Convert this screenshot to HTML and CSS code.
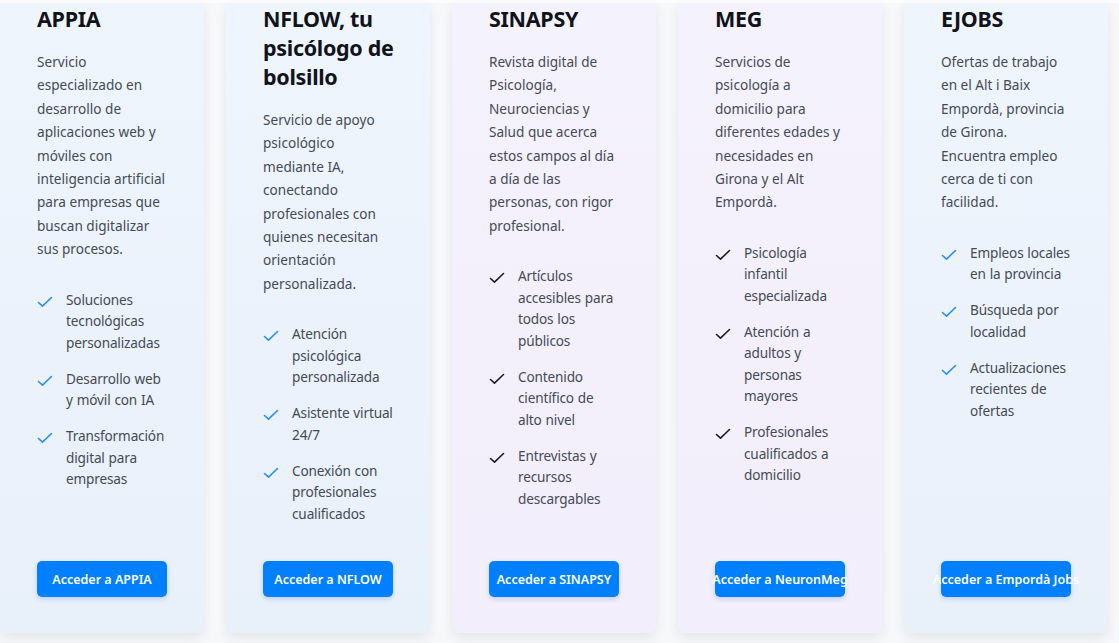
FILE: index.html
```html
<!DOCTYPE html>
<html lang="es">
<head>
<meta charset="utf-8">
<title>Proyectos</title>
<link rel="stylesheet" href="styles.css">
</head>
<body>
<div class="strip"></div>
<section class="grid">
  <article class="card blue">
    <h2 class="title">APPIA</h2>
    <p class="desc">Servicio especializado en desarrollo de aplicaciones web y móviles con inteligencia artificial para empresas que buscan digitalizar sus procesos.</p>
    <ul class="features">
      <li><svg class="check" viewBox="0 0 16 12"><path d="M1.5 6.5 L5.5 10.2 L14.5 1.5"/></svg><span>Soluciones tecnológicas personalizadas</span></li>
      <li><svg class="check" viewBox="0 0 16 12"><path d="M1.5 6.5 L5.5 10.2 L14.5 1.5"/></svg><span>Desarrollo web y móvil con IA</span></li>
      <li><svg class="check" viewBox="0 0 16 12"><path d="M1.5 6.5 L5.5 10.2 L14.5 1.5"/></svg><span>Transformación digital para empresas</span></li>
    </ul>
    <a class="btn" href="#">Acceder a APPIA</a>
  </article>
  <article class="card blue">
    <h2 class="title">NFLOW, tu psicólogo de bolsillo</h2>
    <p class="desc">Servicio de apoyo psicológico mediante IA, conectando profesionales con quienes necesitan orientación personalizada.</p>
    <ul class="features">
      <li><svg class="check" viewBox="0 0 16 12"><path d="M1.5 6.5 L5.5 10.2 L14.5 1.5"/></svg><span>Atención psicológica personalizada</span></li>
      <li><svg class="check" viewBox="0 0 16 12"><path d="M1.5 6.5 L5.5 10.2 L14.5 1.5"/></svg><span>Asistente virtual 24/7</span></li>
      <li><svg class="check" viewBox="0 0 16 12"><path d="M1.5 6.5 L5.5 10.2 L14.5 1.5"/></svg><span>Conexión con profesionales cualificados</span></li>
    </ul>
    <a class="btn" href="#">Acceder a NFLOW</a>
  </article>
  <article class="card lilac">
    <h2 class="title">SINAPSY</h2>
    <p class="desc">Revista digital de Psicología, Neurociencias y Salud que acerca estos campos al día a día de las personas, con rigor profesional.</p>
    <ul class="features">
      <li><svg class="check" viewBox="0 0 16 12"><path d="M1.5 6.5 L5.5 10.2 L14.5 1.5"/></svg><span>Artículos accesibles para todos los públicos</span></li>
      <li><svg class="check" viewBox="0 0 16 12"><path d="M1.5 6.5 L5.5 10.2 L14.5 1.5"/></svg><span>Contenido científico de alto nivel</span></li>
      <li><svg class="check" viewBox="0 0 16 12"><path d="M1.5 6.5 L5.5 10.2 L14.5 1.5"/></svg><span>Entrevistas y recursos descargables</span></li>
    </ul>
    <a class="btn" href="#">Acceder a SINAPSY</a>
  </article>
  <article class="card lilac">
    <h2 class="title">MEG</h2>
    <p class="desc">Servicios de psicología a domicilio para diferentes edades y necesidades en Girona y el Alt Empordà.</p>
    <ul class="features">
      <li><svg class="check" viewBox="0 0 16 12"><path d="M1.5 6.5 L5.5 10.2 L14.5 1.5"/></svg><span>Psicología infantil especializada</span></li>
      <li><svg class="check" viewBox="0 0 16 12"><path d="M1.5 6.5 L5.5 10.2 L14.5 1.5"/></svg><span>Atención a adultos y personas mayores</span></li>
      <li><svg class="check" viewBox="0 0 16 12"><path d="M1.5 6.5 L5.5 10.2 L14.5 1.5"/></svg><span>Profesionales cualificados a domicilio</span></li>
    </ul>
    <a class="btn" href="#">Acceder a NeuronMeg</a>
  </article>
  <article class="card blue">
    <h2 class="title">EJOBS</h2>
    <p class="desc">Ofertas de trabajo en el Alt i Baix Empordà, provincia de Girona. Encuentra empleo cerca de ti con facilidad.</p>
    <ul class="features">
      <li><svg class="check" viewBox="0 0 16 12"><path d="M1.5 6.5 L5.5 10.2 L14.5 1.5"/></svg><span>Empleos locales en la provincia</span></li>
      <li><svg class="check" viewBox="0 0 16 12"><path d="M1.5 6.5 L5.5 10.2 L14.5 1.5"/></svg><span>Búsqueda por localidad</span></li>
      <li><svg class="check" viewBox="0 0 16 12"><path d="M1.5 6.5 L5.5 10.2 L14.5 1.5"/></svg><span>Actualizaciones recientes de ofertas</span></li>
    </ul>
    <a class="btn" href="#">Acceder a Empordà Jobs</a>
  </article>
</section>
</body>
</html>
```
FILE: styles.css
```css
* { box-sizing: border-box; }
html, body { margin: 0; padding: 0; }
body {
  background: #f7f8fa;
  font-family: "Noto Sans", "Open Sans", sans-serif;
  color: #444b55;
  height: 643px;
  overflow: hidden;
}
.strip {
  height: 3px;
  background: #fdfdfe;
}
.grid {
  display: grid;
  grid-template-columns: repeat(5, 204px);
  column-gap: 22px;
  padding: 0;
}
.card {
  height: 630px;
  border-radius: 0 0 8px 8px;
  padding: 1px 37px 36px 37px;
  display: flex;
  flex-direction: column;
  box-shadow: 0 5px 12px rgba(30, 40, 60, 0.09);
}
.card.blue {
  background: linear-gradient(180deg, #eff5fd 0%, #ebf2fb 60%, #e8f0fa 100%);
}
.card.lilac {
  background: linear-gradient(180deg, #f4f2fd 0%, #f2eefb 100%);
}
.title {
  margin: 0 -2px 17px 0;
  font-size: 21.5px;
  line-height: 29px;
  font-weight: 700;
  color: #11131a;
  letter-spacing: -0.3px;
}
.desc {
  margin: 0 0 28px 0;
  font-size: 13.6px;
  line-height: 23.4px;
  color: #454b55;
}
.features {
  list-style: none;
  margin: 0 -1px 0 0;
  padding: 0;
  display: flex;
  flex-direction: column;
  gap: 14.5px;
}
.features li {
  display: flex;
  align-items: flex-start;
  gap: 13px;
  font-size: 13.6px;
  line-height: 21.5px;
  letter-spacing: -0.15px;
  word-spacing: 0.5px;
  color: #454b55;
}
.check {
  flex: 0 0 16px;
  width: 16px;
  height: 12px;
  margin-top: 7px;
  fill: none;
  stroke-width: 1.6;
  stroke-linecap: round;
  stroke-linejoin: round;
}
.blue .check { stroke: #2b8ef2; }
.lilac .check { stroke: #1c1c22; }
.btn {
  margin-top: auto;
  display: flex;
  align-items: center;
  justify-content: center;
  height: 36px;
  width: 130px;
  background: #0080ff;
  color: #ffffff;
  border-radius: 5px;
  font-size: 12.5px;
  font-weight: 600;
  text-decoration: none;
  white-space: nowrap;
  box-shadow: 0 2px 5px rgba(0, 90, 200, 0.2);
}
```
